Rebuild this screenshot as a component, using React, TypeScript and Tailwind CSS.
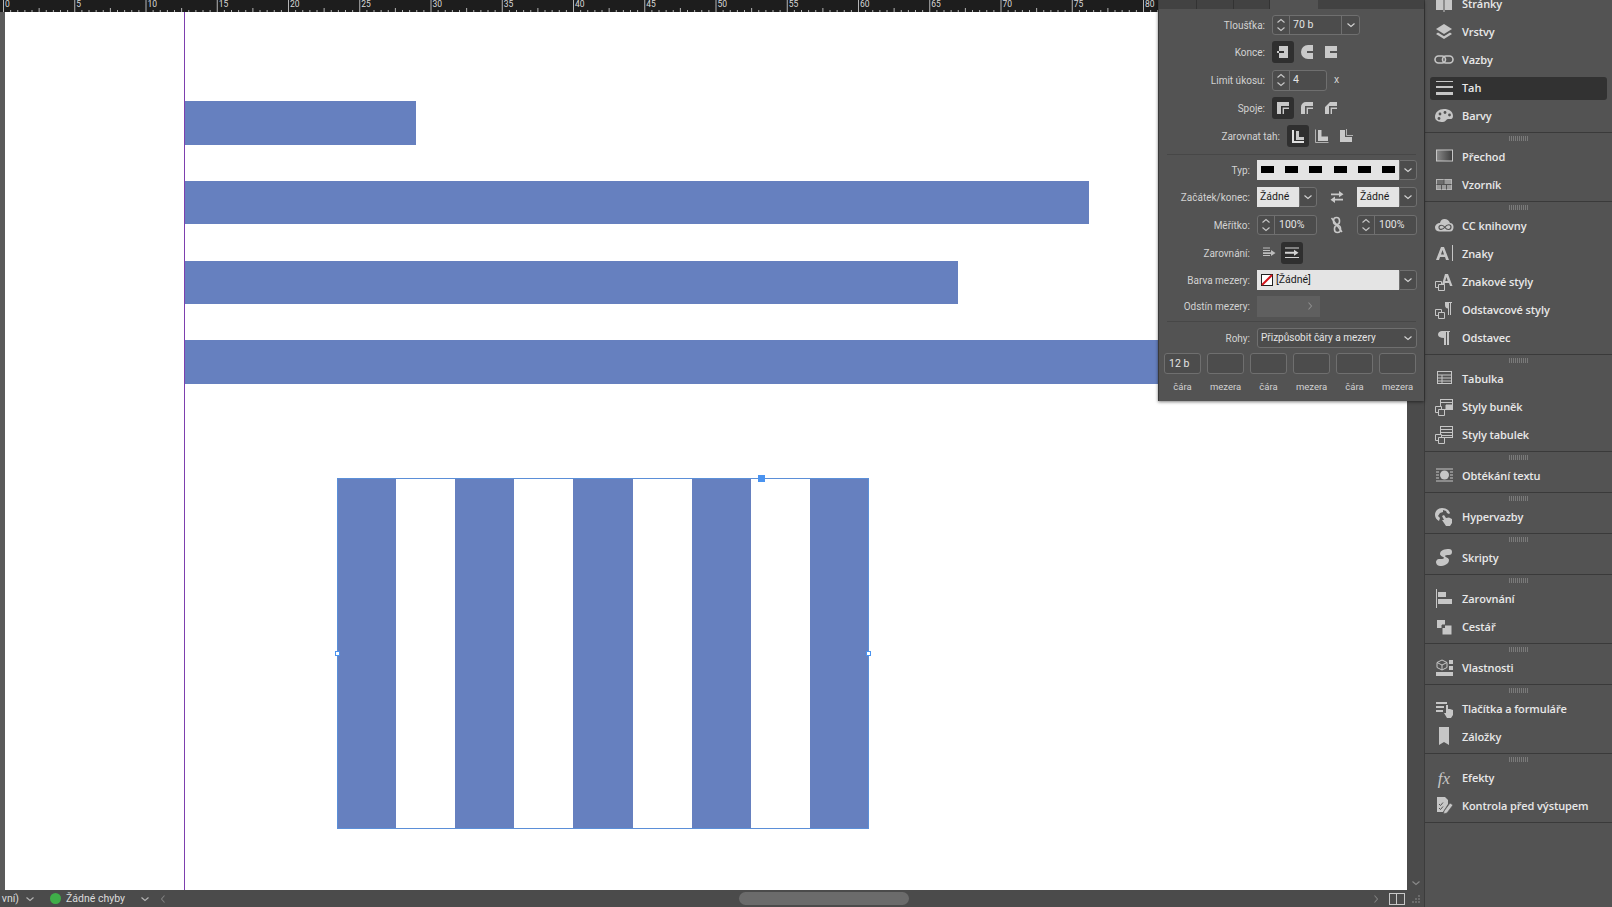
import React from "react";

const font = { fontFamily: '"Open Sans", "Noto Sans", sans-serif' };
const panelFont = { fontFamily: 'Roboto, "Noto Sans", sans-serif' };

const Chevron = ({ dir = "down", className = "" }: { dir?: "down" | "up" | "left" | "right"; className?: string }) => {
  const d = {
    down: "M1.5 3.5 5 6.5l3.5-3",
    up: "M1.5 6.5 5 3.5l3.5 3",
    left: "M6.5 1.5 3.5 5l3 3.5",
    right: "M3.5 1.5 6.5 5l-3 3.5",
  }[dir];
  return (
    <svg width="10" height="10" viewBox="0 0 10 10" className={className}>
      <path d={d} fill="none" stroke="currentColor" strokeWidth="1.1" />
    </svg>
  );
};

const Stepper = () => (
  <div className="w-[17px] h-full border-r border-[#6f6f6f] flex flex-col items-center justify-center text-[#c8c8c8] shrink-0">
    <Chevron dir="up" className="-mb-[1px]" />
    <Chevron dir="down" className="-mt-[1px]" />
  </div>
);

const Box = ({ className = "", children }: { className?: string; children?: React.ReactNode }) => (
  <div className={"flex items-center border border-[#6f6f6f] rounded-[3px] bg-[#4c4c4c] text-[#e4e4e4] text-[10.5px] overflow-hidden " + className}>
    {children}
  </div>
);

const Drop = () => (
  <div className="w-[18px] h-[20px] flex items-center justify-center border border-[#6f6f6f] rounded-r-[3px] bg-[#4c4c4c] text-[#d4d4d4]">
    <Chevron />
  </div>
);

const Light = ({ className = "", children }: { className?: string; children?: React.ReactNode }) => (
  <div className={"h-[20px] bg-[#e4e4e4] text-[#1a1a1a] text-[10.5px] flex items-center pl-[3px] " + className}>{children}</div>
);

const Tool = ({ active, children }: { active?: boolean; children: React.ReactNode }) => (
  <div className={"w-[22px] h-[22px] rounded-[3px] flex items-center justify-center " + (active ? "bg-[#2f2f2f]" : "")}>{children}</div>
);

const g = "#c9c9c9";

const CapButt = () => (
  <svg width="14" height="14" viewBox="0 0 14 14"><path d="M3 1h9v12H3z" fill={g} /><path d="M2 6h6v2H2z" fill="#2f2f2f" /><path d="M1 6h2v2H1z" fill={g} /></svg>
);
const CapRound = () => (
  <svg width="14" height="14" viewBox="0 0 14 14"><path d="M13 0H8a7 7 0 0 0 0 14h5z" fill={g} /><path d="M7 6h6v2H7z" fill="#535353" /></svg>
);
const CapSquare = () => (
  <svg width="14" height="14" viewBox="0 0 14 14"><path d="M1 1h12v12H1z" fill={g} /><path d="M6 6h7v2H6z" fill="#535353" /></svg>
);
const JoinMiter = () => (
  <svg width="14" height="14" viewBox="0 0 14 14"><path d="M1 1h12v7H8v5H1z" fill={g} /><path d="M5 5h8v1.6H6.6V13H5z" fill="#2f2f2f" /></svg>
);
const JoinRound = () => (
  <svg width="14" height="14" viewBox="0 0 14 14"><path d="M6 1h7v7H8v5H1V6a5 5 0 0 1 5-5z" fill={g} /><path d="M5 5h8v1.6H6.6V13H5z" fill="#535353" /></svg>
);
const JoinBevel = () => (
  <svg width="14" height="14" viewBox="0 0 14 14"><path d="M6 1h7v7H8v5H1V6z" fill={g} /><path d="M5 5h8v1.6H6.6V13H5z" fill="#535353" /></svg>
);
const AlignIn = () => (
  <svg width="14" height="14" viewBox="0 0 14 14"><path d="M1 1h2v11h10v2H1z" fill="#e0e0e0" /><path d="M5 2h3v6h5v3H5z" fill={g} /></svg>
);
const AlignMid = () => (
  <svg width="14" height="14" viewBox="0 0 14 14"><path d="M0.5 0.5v13h13" fill="none" stroke={g} strokeWidth="0.8" /><path d="M3 1h3.5v6.5H13V12H3z" fill={g} /></svg>
);
const AlignOut = () => (
  <svg width="14" height="14" viewBox="0 0 14 14"><path d="M1 1h5v7h7v5H1z" fill={g} /><path d="M7.5 0v6.5H14" fill="none" stroke={g} strokeWidth="0.8" /></svg>
);
const Swap = () => (
  <svg width="16" height="12" viewBox="0 0 16 12"><path d="M2 2.4h8V0l4.500 3.200L10 6.200V4.200H2zM14 7.800H6V5.600L1.500 8.800 6 12V9.600h8z" fill={g} /></svg>
);
const Unlink = () => (
  <svg width="14" height="18" viewBox="0 0 14 18" fill="none" stroke={g} strokeWidth="1.6"><rect x="3.5" y="1.5" width="6" height="7" rx="3" /><rect x="4.5" y="9.5" width="6" height="7" rx="3" /><path d="M1.5 2 12 16" strokeWidth="1.4" /></svg>
);
const ArrowA = () => (
  <svg width="14" height="12" viewBox="0 0 14 12"><path d="M1 1h7M1 3.5h7M1 8.5h7" stroke="#bdbdbd" fill="none" /><path d="M1 5.2h8V3l4.5 3L9 9V7H1z" fill="#bdbdbd" /></svg>
);
const ArrowB = () => (
  <svg width="16" height="12" viewBox="0 0 16 12"><path d="M1 1h14M1 10.5h14" stroke="#d4d4d4" fill="none" /><path d="M1 4.8h9V2.8l4.5 3-4.5 3v-2H1z" fill="#d4d4d4" /></svg>
);

const Row = ({ label, w, h, children }: { label?: string; w: string; h: string; children?: React.ReactNode }) => (
  <div className={"flex items-center gap-[7px] " + h}>
    <div className={"pt-[1px] text-right text-[10px] text-[#d2d2d2] whitespace-nowrap " + w}>{label}</div>
    {children}
  </div>
);

const FloatingPanel = () => (
  <div className="absolute left-[1158px] top-0 w-[266px] h-[401px] bg-[#535353] shadow-[0_1px_3px_rgba(0,0,0,0.5)] border-l border-[#3a3a3a]" style={panelFont}>
    <div className="flex h-[9px] bg-[#424242]">
      <div className="w-[38px] border-r border-[#333]" />
      <div className="w-[37px] border-r border-[#333]" />
      <div className="w-[36px] border-r border-[#333]" />
      <div className="w-[48px] bg-[#535353]" />
      <div className="flex-1" />
    </div>
    <div className="h-[3px]" />
    <Row label="Tloušťka:" w="w-[106px]" h="h-[26px]">
      <Box className="w-[88px] h-[20px]">
        <Stepper />
        <span className="pl-[3px] flex-1">70 b</span>
        <div className="w-[18px] h-full border-l border-[#6f6f6f] flex items-center justify-center text-[#d4d4d4]"><Chevron /></div>
      </Box>
    </Row>
    <Row label="Konce:" w="w-[106px]" h="h-[28px]">
      <div className="flex gap-[2px]"><Tool active><CapButt /></Tool><Tool><CapRound /></Tool><Tool><CapSquare /></Tool></div>
    </Row>
    <Row label="Limit úkosu:" w="w-[106px]" h="h-[28px]">
      <Box className="w-[55px] h-[21px]">
        <Stepper />
        <span className="pl-[3px]">4</span>
      </Box>
      <span className="text-[10.5px] text-[#d2d2d2]">x</span>
    </Row>
    <Row label="Spoje:" w="w-[106px]" h="h-[27px]">
      <div className="flex gap-[2px]"><Tool active><JoinMiter /></Tool><Tool><JoinRound /></Tool><Tool><JoinBevel /></Tool></div>
    </Row>
    <Row label="Zarovnat tah:" w="w-[121px]" h="h-[29px]">
      <div className="flex gap-[2px]"><Tool active><AlignIn /></Tool><Tool><AlignMid /></Tool><Tool><AlignOut /></Tool></div>
    </Row>
    <div className="mx-[8px] mt-[4px] border-t border-[#474747]" />
    <div className="h-[1px]" />
    <Row label="Typ:" w="w-[91px]" h="h-[27px]">
      <div className="flex">
        <div className="w-[142px] h-[20px] bg-[#e4e4e4] flex items-center justify-between px-[4px]">
          {[0, 1, 2, 3, 4, 5].map((i) => (
            <div key={i} className="w-[13px] h-[7px] bg-black" />
          ))}
        </div>
        <Drop />
      </div>
    </Row>
    <Row label="Začátek/konec:" w="w-[91px]" h="h-[27px]">
      <div className="flex items-center">
        <Light className="w-[42px]">Žádné</Light>
        <Drop />
        <div className="w-[40px] flex justify-center"><Swap /></div>
        <Light className="w-[42px]">Žádné</Light>
        <Drop />
      </div>
    </Row>
    <Row label="Měřítko:" w="w-[91px]" h="h-[30px]">
      <div className="flex items-center">
        <Box className="w-[60px] h-[20px]"><Stepper /><span className="pl-[4px]">100%</span></Box>
        <div className="w-[40px] flex justify-center"><Unlink /></div>
        <Box className="w-[60px] h-[20px]"><Stepper /><span className="pl-[4px]">100%</span></Box>
      </div>
    </Row>
    <Row label="Zarovnání:" w="w-[91px]" h="h-[26px]">
      <div className="flex items-center">
        <div className="w-[24px] flex justify-center"><ArrowA /></div>
        <Tool active><ArrowB /></Tool>
      </div>
    </Row>
    <Row label="Barva mezery:" w="w-[91px]" h="h-[27px]">
      <div className="flex">
        <Light className="w-[142px] gap-[3px]">
          <svg width="12" height="12" viewBox="0 0 12 12" className="ml-[1px]">
            <rect x="0.5" y="0.5" width="11" height="11" fill="#fff" stroke="#222" />
            <path d="M1 11 11 1" stroke="#d4141c" strokeWidth="2" />
          </svg>
          [Žádné]
        </Light>
        <Drop />
      </div>
    </Row>
    <Row label="Odstín mezery:" w="w-[91px]" h="h-[26px]">
      <div className="w-[63px] h-[21px] bg-[#5f5f5f] flex items-center justify-end pr-[5px] text-[#8d8d8d]"><Chevron dir="right" /></div>
    </Row>
    <div className="mx-[8px] mt-[2px] border-t border-[#474747]" />
    <div className="h-[3px]" />
    <Row label="Rohy:" w="w-[91px]" h="h-[25px]">
      <Box className="w-[160px] h-[20px] justify-between pl-[3px] pr-[3px] !text-[10px]">
        <span>Přizpůsobit čáry a mezery</span>
        <Chevron className="text-[#d4d4d4]" />
      </Box>
    </Row>
    <div className="flex gap-[6px] pl-[5px] pt-[3px]">
      {["12 b", "", "", "", "", ""].map((v, i) => (
        <Box key={i} className="w-[37px] h-[21px] pl-[4px]">{v}</Box>
      ))}
    </div>
    <div className="flex gap-[6px] pl-[5px] pt-[6px]">
      {["čára", "mezera", "čára", "mezera", "čára", "mezera"].map((v, i) => (
        <div key={i} className="w-[37px] text-center text-[9.5px] text-[#d2d2d2] whitespace-nowrap">{v}</div>
      ))}
    </div>
  </div>
);

const c = "#c6c6c6";

const icons: Record<string, React.ReactNode> = {
  pages: <><path d="M2 4h7v12H2zM11 4h7v12h-7z" fill={c} /><path d="M10 1v17" stroke={c} /></>,
  layers: <><path d="M10 2 18 7l-8 5-8-5z" fill={c} /><path d="M4 10.5 2 12l8 5 8-5-2-1.5-6 3.8z" fill={c} /></>,
  links: <><rect x="1" y="6" width="10.500" height="7" rx="3.500" fill="none" stroke={c} strokeWidth="1.600" /><rect x="8.500" y="6" width="10.500" height="7" rx="3.500" fill="none" stroke={c} strokeWidth="1.600" /></>,
  stroke: <path d="M2 3h17v1H2zM2 8h17v2H2zM2 14h17v3H2z" fill={c} />,
  swatches: <><path d="M1 11c0-5 4-8 9-8 5 0 9 2.500 9 7 0 4-3 3-5 3-2 0-2 3-5 3-4 0-8-1-8-5z" fill={c} /><circle cx="6" cy="8" r="1.400" fill="#535353" /><circle cx="11" cy="6.500" r="1.400" fill="#535353" /><circle cx="15.500" cy="9" r="1.400" fill="#535353" /><circle cx="5" cy="12.500" r="1.400" fill="#535353" /></>,
  gradient: <><defs><linearGradient id="gr"><stop offset="0" stopColor="#8a8a8a" /><stop offset="1" stopColor="#3c3c3c" /></linearGradient></defs><rect x="2.500" y="3" width="16" height="11" fill="url(#gr)" stroke={c} /></>,
  grid: <><rect x="2.500" y="4.500" width="15" height="10" fill="#9a9a9a" stroke="#b5b5b5" /><path d="M3 5h7v4.500H3z" fill="#6d6d6d" /><path d="M2.500 9.500h15M7.500 9.500v5M10 4.500v5M12.500 9.500v5" stroke="#535353" fill="none" /></>,
  cc: <><path d="M6 15.500h10c2.500 0 3.500-2 3.500-4.500s-1.500-4-3.500-4c-1-2.500-3-4-5.500-4S6.500 4.500 6 7c-2.500 0-5 2-5 4.500S3 15.500 6 15.500z" fill={c} /><path d="M5 11.500c0-3 4-3 6 0s6 2.500 6-.5-4-3-6 0-6 3-6 .5z" fill="none" stroke="#535353" strokeWidth="1.200" /></>,
  charA: <path d="M7 3h3l5 13h-3l-1-3H6l-1 3H2zM8.500 6 7 10.500h3zM18 1h1v16h-1z" fill={c} />,
  charStyles: <><path d="M11 2h3l4.500 12H16l-1-3h-4l-1 3H7.500zM12.500 5l-1.200 4h2.400z" fill={c} /><path d="M1.500 9.500h6v6h-6z" fill="none" stroke={c} /><path d="M4.500 12.500h6v6h-6z" fill="#535353" stroke={c} /></>,
  paraStyles: <><path d="M11 2h7v1h-1v12h-1V3h-1v12h-1V8.500c-2 0-3-1.500-3-3.200S11 2 11 2z" fill={c} /><path d="M1.500 9.500h6v6h-6z" fill="none" stroke={c} /><path d="M4.500 12.500h6v6h-6z" fill="#535353" stroke={c} /></>,
  para: <path d="M8 3h8v1h-1v13h-2V4h-1v13h-2V10C6 10 4 8.500 4 6.500S6 3 8 3z" fill={c} />,
  table: <><rect x="3.500" y="2.500" width="14" height="12" fill="none" stroke={c} /><path d="M3.500 6h14M3.500 9h14M3.500 12h14M8 6v8.500" stroke={c} fill="none" /></>,
  cellStyles: <><rect x="6.500" y="2.500" width="12" height="10" fill="none" stroke={c} /><path d="M6.500 5.500h12M12 8h6v4h-6z" stroke={c} fill={c} /><path d="M1.500 9.500h6v6h-6z" fill="#535353" stroke={c} /><path d="M4.500 12.500h6v6h-6z" fill="#535353" stroke={c} /></>,
  tableStyles: <><rect x="6.500" y="1.500" width="12" height="11" fill="none" stroke={c} /><path d="M6.500 4.500h12M6.500 7.500h12M6.500 10.500h12" stroke={c} /><path d="M1.500 9.500h6v6h-6z" fill="#535353" stroke={c} /><path d="M4.500 12.500h6v6h-6z" fill="#535353" stroke={c} /></>,
  wrap: <><path d="M2 3h17M2 15h17M2 6h3M2 9h3M2 12h3M16 6h3M16 9h3M16 12h3" stroke={c} fill="none" /><circle cx="10.500" cy="9" r="4.500" fill={c} /></>,
  hyper: <><path d="M8 1C4 1 1 4 1 8c0 3 2 5 4 6l1-3-2-2 2-3 3-1 0-2 3 1 1 2 2 1 1-1c-1-3-4-5-8-5z" fill={c} /><path d="M8 9l2-1 2 3 3-.5 3 1.500 0 4-2 3h-4l-4-6 2 0z" fill={c} /></>,
  script: <path d="M15 1c-4 0-9 1-9 5 0 2 4 3 4 4s-3 1-5 1-3 2-3 3 1 4 4 4c4 0 9-2 9-6 0-2-4-3-4-4s2-1 4-1 3-1 3-3-1-3-3-3z" fill={c} />,
  align: <><path d="M2.500 0v19" stroke={c} fill="none" /><path d="M4 3h8v5H4zM4 10h14v5H4z" fill={c} /></>,
  pathfinder: <><path d="M3 3h8v8H3z" fill={c} /><path d="M8 8h10v10H8z" fill={c} stroke="#535353" strokeWidth="1" /><path d="M8 8h3v3H8z" fill="#535353" /></>,
  props: <><path d="M8 2 13 4.500v5L8 12 3 9.500v-5zM3 4.500 8 7l5-2.500M8 7v5" fill="none" stroke={c} /><path d="M15 2h4v4h-4zM15 8h4v4h-4zM2 14h17v4H2z" fill={c} /></>,
  buttons: <><path d="M2 3h11v2H2zM2 7h8v2H2zM2 11h7v2H2z" fill={c} /><path d="M12 6h2v4h2l3 1v5l-2 3h-4l-3-5 2 0z" fill={c} /></>,
  bookmark: <path d="M5 0h10v18l-5-3-5 3z" fill={c} />,
  preflight: <><path d="M3 1h8l3 3v4l-5 8H3z" fill={c} /><path d="M5 8l1.500 1.500L9 6.500M5 12l1.500 1.500L9 10.500" stroke="#535353" fill="none" /><path d="M10 15l6-8 3 2-6 8-3.500 1z" fill={c} stroke="#535353" strokeWidth="0.700" /></>,
};

const Item = ({ icon, label, active }: { icon: string; label: string; active?: boolean }) => (
  <div className="h-[28px] flex items-center mx-[5px]">
    <div className={"h-[23px] flex-1 flex items-center px-[4px] gap-[8px] rounded-[3px] " + (active ? "bg-[#323232]" : "")}>
      <div className="w-[20px] h-[20px] flex items-center justify-center shrink-0">
        {icon === "fx" ? (
          <span className="text-[#c6c6c6] text-[17px] italic leading-none" style={{ fontFamily: '"Liberation Serif", serif' }}>fx</span>
        ) : (
          <svg width="20" height="20" viewBox="0 0 20 20">{icons[icon]}</svg>
        )}
      </div>
      <span className="text-[11px] font-semibold text-[#e8e8e8] whitespace-nowrap tracking-[-0.1px]">{label}</span>
    </div>
  </div>
);

const Grip = () => (
  <div className="h-[10px] flex items-center justify-center gap-[1px]">
    {Array.from({ length: 10 }).map((_, i) => (
      <div key={i} className="w-[1px] h-[5px] bg-[#7a7a7a]" />
    ))}
  </div>
);

const groups: { icon: string; label: string; active?: boolean }[][] = [
  [
    { icon: "pages", label: "Stránky" },
    { icon: "layers", label: "Vrstvy" },
    { icon: "links", label: "Vazby" },
    { icon: "stroke", label: "Tah", active: true },
    { icon: "swatches", label: "Barvy" },
  ],
  [
    { icon: "gradient", label: "Přechod" },
    { icon: "grid", label: "Vzorník" },
  ],
  [
    { icon: "cc", label: "CC knihovny" },
    { icon: "charA", label: "Znaky" },
    { icon: "charStyles", label: "Znakové styly" },
    { icon: "paraStyles", label: "Odstavcové styly" },
    { icon: "para", label: "Odstavec" },
  ],
  [
    { icon: "table", label: "Tabulka" },
    { icon: "cellStyles", label: "Styly buněk" },
    { icon: "tableStyles", label: "Styly tabulek" },
  ],
  [{ icon: "wrap", label: "Obtékání textu" }],
  [{ icon: "hyper", label: "Hypervazby" }],
  [{ icon: "script", label: "Skripty" }],
  [
    { icon: "align", label: "Zarovnání" },
    { icon: "pathfinder", label: "Cestář" },
  ],
  [{ icon: "props", label: "Vlastnosti" }],
  [
    { icon: "buttons", label: "Tlačítka a formuláře" },
    { icon: "bookmark", label: "Záložky" },
  ],
  [
    { icon: "fx", label: "Efekty" },
    { icon: "preflight", label: "Kontrola před výstupem" },
  ],
];

const Dock = () => (
  <div className="w-[188px] shrink-0 h-full bg-[#535353] border-l border-[#3c3c3c] overflow-hidden" style={font}>
    <div className="-mt-[20px]">
      {groups.map((items, i) => (
        <div key={i} className="border-b border-[#3a3a3a] pb-[2px]">
          <Grip />
          {items.map((it) => (
            <Item key={it.label} {...it} />
          ))}
        </div>
      ))}
    </div>
  </div>
);

const Ruler = () => (
  <div className="h-[12px] bg-[#1d1d1d] overflow-hidden" style={panelFont}>
    <svg width="1424" height="12">
      {Array.from({ length: 165 }).map((_, i) => {
        const x = 3.5 + i * 7.125;
        const len = i % 10 === 0 ? 12 : i % 5 === 0 ? 4 : 2;
        return <line key={i} x1={x} x2={x} y1={12 - len} y2={12} stroke="#b5b5b5" strokeWidth="1" />;
      })}
      {Array.from({ length: 17 }).map((_, i) => (
        <text key={i} x={5 + i * 71.25} y={7} fontSize="8.500" fill="#d8d8d8">{i * 5}</text>
      ))}
    </svg>
  </div>
);

const Bar = ({ className }: { className: string }) => <div className={"absolute left-[180px] bg-[#6680bf] " + className} />;

const Canvas = () => (
  <div className="relative flex-1 bg-white overflow-hidden">
    <div className="absolute left-[179px] top-0 bottom-0 w-[1px] bg-[#7d3fae]" />
    <Bar className="top-[89px] h-[44px] w-[231px]" />
    <Bar className="top-[169px] h-[43px] w-[904px]" />
    <Bar className="top-[249px] h-[43px] w-[773px]" />
    <Bar className="top-[328px] h-[44px] w-[1000px]" />
    <div className="absolute left-[332px] top-[466px] w-[532px] h-[351px] flex">
      {[0, 1, 2, 3, 4, 5, 6, 7, 8].map((i) => (
        <div key={i} className={"flex-1 " + (i % 2 === 0 ? "bg-[#6680bf]" : "bg-white")} />
      ))}
      <div className="absolute inset-0 border border-[#5b8fd8]" />
      <div className="absolute left-[421px] -top-[3px] w-[7px] h-[7px] bg-[#4a93f0]" />
      <div className="absolute -left-[2px] top-[173px] w-[5px] h-[5px] bg-white border border-[#4a93f0]" />
      <div className="absolute -right-[2px] top-[173px] w-[5px] h-[5px] bg-white border border-[#4a93f0]" />
    </div>
  </div>
);

const StatusBar = () => (
  <div className="h-[17px] bg-[#4b4b4b] flex items-center text-[#dcdcdc] text-[10.5px] overflow-hidden relative" style={panelFont}>
    <span className="w-[19px] text-right whitespace-nowrap">vní)</span>
    <Chevron className="ml-[6px] text-[#b5b5b5]" />
    <div className="ml-[15px] w-[11px] h-[11px] rounded-full bg-[#3fae49]" />
    <span className="ml-[5px] whitespace-nowrap">Žádné chyby</span>
    <Chevron className="ml-[15px] text-[#b5b5b5]" />
    <Chevron dir="left" className="ml-[8px] text-[#7f7f7f]" />
    <div className="ml-[571px] w-[170px] h-[13px] rounded-full bg-[#6b6b6b]" />
    <div className="ml-auto flex items-center">
      <Chevron dir="right" className="text-[#7f7f7f] mr-[8px]" />
      <div className="w-[16px] h-[12px] border border-[#c8c8c8] flex mr-[7px]">
        <div className="w-1/2 border-r border-[#c8c8c8]" />
      </div>
      <svg width="8" height="8" viewBox="0 0 8 8" className="mr-[4px]">
        <path d="M6 0h2v2H6zM3 3h2v2H3zM6 3h2v2H6zM0 6h2v2H0zM3 6h2v2H3zM6 6h2v2H6z" fill="#6b6b6b" />
      </svg>
    </div>
  </div>
);

export default function App() {
  return (
    <div className="relative w-full h-screen flex bg-[#535353] overflow-hidden">
      <div className="flex-1 flex flex-col min-w-0">
        <Ruler />
        <div className="flex-1 flex min-h-0">
          <div className="w-[5px] bg-[#5a5a5a] shrink-0" />
          <Canvas />
          <div className="w-[17px] shrink-0 bg-[#4b4b4b] flex flex-col justify-end items-center pb-[2px] text-[#8a8a8a]">
            <Chevron />
          </div>
        </div>
        <StatusBar />
      </div>
      <Dock />
      <FloatingPanel />
    </div>
  );
}
